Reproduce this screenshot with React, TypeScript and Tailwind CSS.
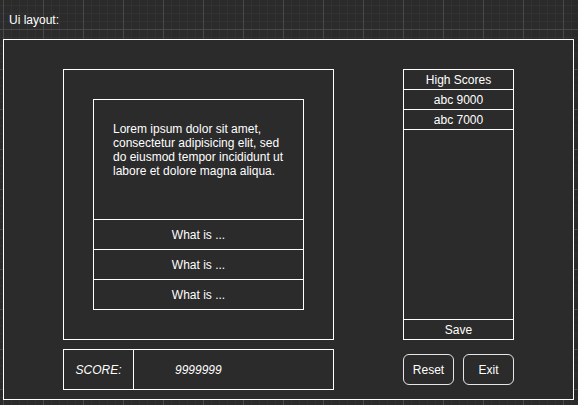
import React from "react";

const font = "font-['Liberation_Sans',Arial,sans-serif]";

export default function App() {
  return (
    <div
      className={`${font} min-h-screen w-full bg-[#2b2b2b] text-white text-[12px] leading-[14px] bg-[linear-gradient(to_right,#484848_1px,transparent_1px),linear-gradient(to_bottom,#484848_1px,transparent_1px),linear-gradient(to_right,#323232_1px,transparent_1px),linear-gradient(to_bottom,#323232_1px,transparent_1px)] bg-size-[40px_40px,40px_40px,8px_8px,8px_8px] bg-position-[3px_29px,3px_29px,3px_5px,3px_5px]`}
    >
      <div className="pl-[9px] pt-[13px] h-[27px]">Ui layout:</div>
      <div className="ml-[3px] mt-[12px] w-[571px] h-[361px] border border-white bg-[#2b2b2b] flex pl-[59px] pt-[29px]">
        {/* Left column */}
        <div className="w-[271px] flex flex-col">
          <div className="w-[271px] h-[271px] border border-white p-[29px]">
            <div className="w-[211px] h-[211px] border border-white flex flex-col">
              <div className="h-[120px] border-b border-white pl-[19px] pr-[19px] pt-[22px]">
                Lorem ipsum dolor sit amet, consectetur adipisicing elit, sed do eiusmod tempor incididunt ut labore et dolore magna aliqua.
              </div>
              <div className="h-[30px] border-b border-white flex items-center justify-center">What is ...</div>
              <div className="h-[30px] border-b border-white flex items-center justify-center">What is ...</div>
              <div className="h-[29px] flex items-center justify-center">What is ...</div>
            </div>
          </div>
          <div className="mt-[9px] w-[271px] h-[41px] border border-white flex italic">
            <div className="w-[70px] border-r border-white flex items-center justify-center">SCORE:</div>
            <div className="flex-1 flex items-center pl-[41px]">9999999</div>
          </div>
        </div>
        {/* Right column */}
        <div className="ml-[69px] w-[111px] flex flex-col">
          <div className="h-[271px] border border-white flex flex-col">
            <div className="h-[20px] border-b border-white flex items-center justify-center">High Scores</div>
            <div className="h-[20px] border-b border-white flex items-center justify-center">abc 9000</div>
            <div className="h-[20px] border-b border-white flex items-center justify-center">abc 7000</div>
            <div className="flex-1" />
            <div className="h-[20px] border-t border-white flex items-center justify-center">Save</div>
          </div>
          <div className="mt-[14px] flex gap-[9px]">
            <button className="w-[51px] h-[31px] border border-[#e6e6e6] rounded-[6px] flex items-center justify-center text-white text-[12px]">Reset</button>
            <button className="w-[51px] h-[31px] border border-[#e6e6e6] rounded-[6px] flex items-center justify-center text-white text-[12px]">Exit</button>
          </div>
        </div>
      </div>
    </div>
  );
}
